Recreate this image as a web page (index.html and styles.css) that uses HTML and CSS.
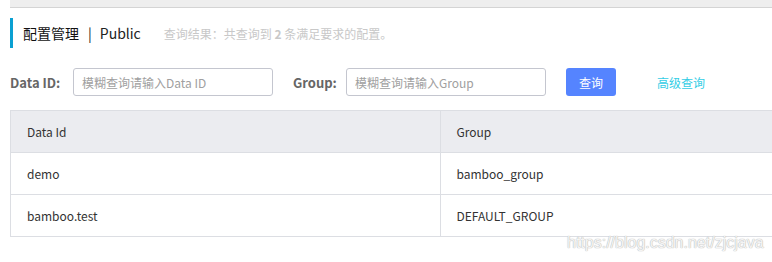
FILE: index.html
```html
<!DOCTYPE html>
<html lang="zh-CN">
  <head>
    <meta charset="UTF-8" />
    <title>配置管理</title>
    <link rel="stylesheet" href="styles.css">
  </head>
  <body>
    <div class="page">
      <div class="top-bar"></div>
      <div class="title-row">
        <span class="title">配置管理</span>
        <span class="title-sep">|</span>
        <span class="title-ns">Public</span>
        <span class="summary">查询结果：共查询到 <b>2</b> 条满足要求的配置。</span>
      </div>
      <form class="search-form">
        <label class="form-label" for="dataId">Data ID:</label>
        <input class="form-input" id="dataId" type="text" placeholder="模糊查询请输入Data ID" />
        <label class="form-label" for="group">Group:</label>
        <input class="form-input" id="group" type="text" placeholder="模糊查询请输入Group" />
        <button class="btn-primary" type="button">查询</button>
        <a class="link-advanced" href="#">高级查询</a>
      </form>
      <div class="table-wrap">
        <table class="config-table">
          <thead>
            <tr>
              <th>Data Id</th>
              <th>Group</th>
            </tr>
          </thead>
          <tbody>
            <tr>
              <td>demo</td>
              <td>bamboo_group</td>
            </tr>
            <tr>
              <td>bamboo.test</td>
              <td>DEFAULT_GROUP</td>
            </tr>
          </tbody>
        </table>
      </div>
    </div>
    <div class="watermark">https://blog.csdn.net/zjcjava</div>
  </body>
</html>
```

FILE: styles.css
```css
* {
  box-sizing: border-box;
  margin: 0;
  padding: 0;
}

body {
  font-family: "Noto Sans CJK SC", "Noto Sans", sans-serif;
  font-size: 12px;
  color: #333;
  background: #fff;
  width: 772px;
  height: 262px;
  overflow: hidden;
  position: relative;
}

.page {
  padding-left: 10px;
}

.top-bar {
  height: 8px;
  background: #eeeeee;
  border-bottom: 1px solid #d4d4d4;
}

.title-row {
  display: flex;
  align-items: center;
  height: 30px;
  margin-top: 10px;
  padding-left: 10px;
  border-left: 3px solid #0aa0d2;
}

.title {
  font-size: 14px;
  color: #111;
}

.title-sep {
  font-size: 14px;
  color: #222;
  margin: 0 8px 0 9px;
}

.title-ns {
  font-size: 14px;
  color: #222;
}

.summary {
  margin-left: 23px;
  font-size: 12px;
  color: #c8c8c8;
}

.summary b {
  font-weight: 700;
}

.search-form {
  display: flex;
  align-items: center;
  margin-top: 20px;
  height: 28px;
}

.form-label {
  font-size: 13px;
  font-weight: 700;
  color: #666;
  width: 63px;
}

.form-input {
  width: 200px;
  height: 28px;
  padding: 0 8px;
  border: 1px solid #c4c6cf;
  border-radius: 3px;
  font-family: inherit;
  font-size: 12px;
  color: #333;
  margin-right: 20px;
}

.form-input + .form-label {
  width: 53px;
}

.form-input::placeholder {
  color: #a0a0a0;
}

.btn-primary {
  width: 50px;
  height: 28px;
  border: none;
  border-radius: 3px;
  background: #5584ff;
  color: #fff;
  font-family: inherit;
  font-size: 12px;
}

.link-advanced {
  margin-left: 41px;
  color: #33cde5;
  text-decoration: none;
  font-size: 12px;
}

.table-wrap {
  margin-top: 14px;
  overflow: hidden;
}

.config-table {
  width: 860px;
  border-collapse: collapse;
  table-layout: fixed;
}

.config-table th,
.config-table td {
  height: 42px;
  padding: 0 16px;
  border: 1px solid #dcdee3;
  text-align: left;
  font-weight: 400;
  font-size: 12px;
  color: #333;
}

.config-table th {
  background: #ebecf0;
}

.watermark {
  position: absolute;
  left: 567px;
  top: 234px;
  font-family: "Liberation Sans", Arial, sans-serif;
  font-size: 16px;
  color: #f4f4f4;
  text-shadow: 0 0 1px #b8b8b8, 0 0 1px #b8b8b8;
}
```
